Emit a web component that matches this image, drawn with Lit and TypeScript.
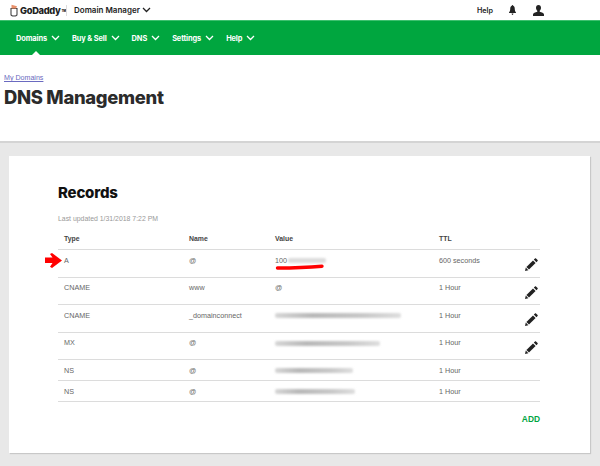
import { LitElement, html, css, svg } from "lit";
import { customElement } from "lit/decorators.js";

const chev = html`<svg class="chev" width="9" height="6" viewBox="0 0 9 6"><path d="M1 1l3.500 3.500L8 1" fill="none" stroke="currentColor" stroke-width="1.300"/></svg>`;
const pencil = html`<svg class="pencil" width="13" height="13" viewBox="0 0 13 13"><path d="M0 13l.8-3.400 2.600 2.600z" fill="#222"/><path d="M1.400 9 8 2.400l2.600 2.600L4 11.600z" fill="#222"/><path d="M8.800 1.600 10 .4c.3-.3.7-.3 1 0l1.600 1.600c.3.3.3.7 0 1l-1.200 1.200z" fill="#222"/></svg>`;

type Row = { type: string; name: string; value?: string; blur?: [number, string?]; ttl: string; edit: boolean; tall: boolean };
const rows: Row[] = [
  { type: "A", name: "@", value: "100", blur: [38, "ip"], ttl: "600 seconds", edit: true, tall: true },
  { type: "CNAME", name: "www", value: "@", ttl: "1 Hour", edit: true, tall: true },
  { type: "CNAME", name: "_domainconnect", blur: [126], ttl: "1 Hour", edit: true, tall: true },
  { type: "MX", name: "@", blur: [105], ttl: "1 Hour", edit: true, tall: true },
  { type: "NS", name: "@", blur: [78], ttl: "1 Hour", edit: false, tall: false },
  { type: "NS", name: "@", blur: [80], ttl: "1 Hour", edit: false, tall: false },
];

@customElement("app-root")
export class AppRoot extends LitElement {
  static styles = css`
    :host { display: block; width: 600px; height: 466px; overflow: hidden; background: #e8e8e8; font-family: "Liberation Sans", Arial, sans-serif; position: relative; }
    .top { height: 20px; background: #fff; display: flex; align-items: center; padding: 0 56px 0 10px; color: #222; }
    .logo { display: flex; align-items: center; gap: 1px; font: 800 9.300px "Inter", sans-serif; letter-spacing: -0.3px; width: 56px; }
    .tm { font-size: 3px; align-self: flex-start; margin-top: 5px; }
    .sep { width: 1px; height: 11px; background: #ddd; margin: 0 7px 0 0; }
    .app { font: 600 8px "Inter", sans-serif; display: flex; align-items: center; gap: 2px; }
    .right { margin-left: auto; display: flex; align-items: center; }
    .help { font: 600 7.200px "Inter", sans-serif; margin-right: 16px; }
    .bell { margin-right: 17px; }
    .nav { height: 35px; background: #00a63f; border-top: 1px solid #3ec06f; box-sizing: border-box; display: flex; align-items: center; padding: 0 0 0 16px; color: #fff; position: relative; }
    .nav a { font: 700 7.400px "Inter", sans-serif; display: flex; align-items: center; gap: 4px; margin-right: 12px; letter-spacing: -0.1px; }
    .nav .notch { position: absolute; left: 32px; bottom: 0; width: 0; height: 0; border: 4px solid transparent; border-top: 0; border-bottom-color: #fff; }
    .head { height: 88px; box-sizing: border-box; background: #fff; border-bottom: 2px solid #d4d4d4; padding: 18px 4px 0; }
    .crumb { font-size: 7.100px; color: #6a6ac0; text-decoration: underline; line-height: 10px; }
    h1 { margin: 1px 0 0; font: 800 18.400px/26px "Inter", sans-serif; color: #2b2b2b; letter-spacing: -0.300px; }
    .card { margin: 13px 10px 0 9px; height: 297px; box-sizing: border-box; background: #fff; box-shadow: 1px 1px 1px #c8c8c8; padding: 27px 50px 0 49px; position: relative; }
    h2 { margin: 0; font: 800 15px/20px "Inter", sans-serif; color: #111; letter-spacing: -0.200px; }
    .updated { margin-top: 11px; font-size: 6.900px; line-height: 10px; color: #999; }
    .grid { margin-top: 10px; }
    .row { display: grid; grid-template-columns: 125px 86px 164px 1fr 15px; border-bottom: 1px solid #dcdcdc; box-sizing: border-box; padding-left: 6px; font-size: 7.200px; color: #666; }
    .row.h { height: 16px; font-size: 6.900px; font-weight: 700; color: #444; line-height: 10px; }
    .row.tall { height: 27.600px; padding-top: 4.500px; line-height: 12px; }
    .row.short { height: 21px; padding-top: 4.500px; line-height: 12px; }
    .val { display: flex; align-items: center; height: 12px; }
    .smear { display: inline-block; height: 5px; border-radius: 2px; background: linear-gradient(90deg, #d6d6d6, #b8b8b8 30%, #c8c8c8 70%, #dedede); filter: blur(1.200px); }
    .smear.ip { height: 5px; background: #dcdcdc; margin-left: 1px; }
    .pencil { margin-top: 3.500px; display: block; }
    .add { margin-top: 12px; text-align: right; color: #00a63f; font-size: 8.400px; font-weight: 700; line-height: 10px; }
    .mark { position: absolute; left: 0; top: 0; pointer-events: none; }
  `;

  render() {
    return html`
      <div class="top">
        <div class="logo">
          <svg width="9" height="13" viewBox="0 0 9 13"><path d="M1 4.500h6v6c0 1-1 1.500-3 1.500s-3-.5-3-1.500z" fill="none" stroke="#444" stroke-width="1.100"/><path d="M1.500 .8 7 2.200 6 4.500H1.500z" fill="#e8906a"/></svg>
          <span>GoDaddy</span><span class="tm">TM</span>
        </div>
        <div class="sep"></div>
        <div class="app">Domain Manager ${chev}</div>
        <div class="right">
          <span class="help">Help</span>
          <svg class="bell" width="7" height="10" viewBox="0 0 8 10" preserveAspectRatio="none"><path d="M4 0c.5 0 .8.3.8.8C6.200 1.200 6.600 2.400 6.600 4c0 1.600.5 2.600 1.400 3.400V8H0v-.6C.9 6.600 1.400 5.600 1.400 4c0-1.600.4-2.800 1.800-3.200C3.200.3 3.500 0 4 0zM3 8.600h2C5 9.500 4.500 10 4 10s-1-.5-1-1.400z" fill="#222"/></svg>
          <svg width="11" height="11" viewBox="0 0 11 11"><path d="M5.500 0C7.200 0 8 1.200 8 2.800 8 4.200 7.400 5.300 6.700 5.800v1C8.700 7.300 11 8 11 9.500V11H0V9.500C0 8 2.300 7.300 4.300 6.800v-1C3.600 5.300 3 4.200 3 2.800 3 1.200 3.800 0 5.500 0z" fill="#222"/></svg>
        </div>
      </div>
      <nav class="nav">
        <a>Domains ${chev}</a><a>Buy &amp; Sell ${chev}</a><a>DNS ${chev}</a><a>Settings ${chev}</a><a>Help ${chev}</a>
        <span class="notch"></span>
      </nav>
      <header class="head">
        <div class="crumb">My Domains</div>
        <h1>DNS Management</h1>
      </header>
      <section class="card">
        <h2>Records</h2>
        <div class="updated">Last updated 1/31/2018 7:22 PM</div>
        <div class="grid">
          <div class="row h"><span>Type</span><span>Name</span><span>Value</span><span>TTL</span><span></span></div>
          ${rows.map(r => html`
            <div class="row ${r.tall ? "tall" : "short"}">
              <span>${r.type}</span><span>${r.name}</span>
              <span class="val">${r.value ?? ""}${r.blur ? html`<span class="smear ${r.blur[1] ?? ""}" style="width:${r.blur[0]}px"></span>` : ""}</span>
              <span>${r.ttl}</span>
              <span>${r.edit ? pencil : ""}</span>
            </div>`)}
        </div>
        <div class="add">ADD</div>
      </section>
      <svg class="mark" width="600" height="466" viewBox="0 0 600 466">
        ${svg`<path d="M277.500 268c15 0 30-.5 44.500-1.800" fill="none" stroke="#f00" stroke-width="3.400" stroke-linecap="round"/>`}
        ${svg`<path d="M45 257.500h7.500L50 254l2-1 10 7.500-10 7.500-2-1.200 2.500-3.800H45z" fill="#f00"/>`}
      </svg>
    `;
  }
}
